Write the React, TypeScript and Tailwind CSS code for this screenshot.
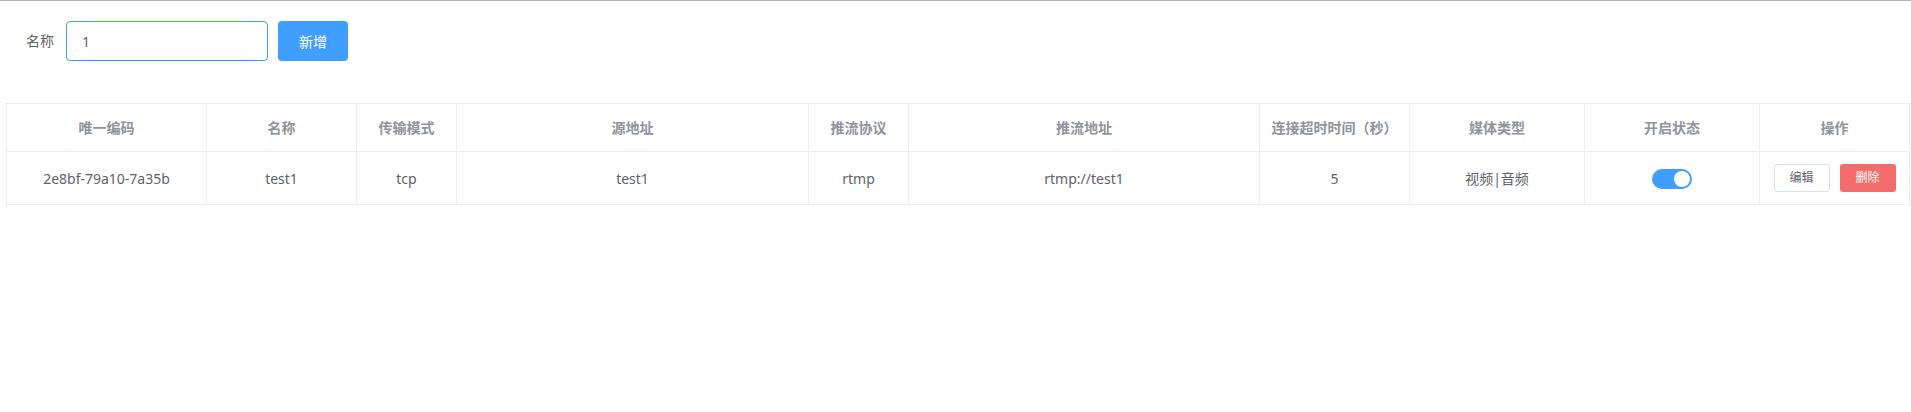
import React, { useState } from "react";

interface StreamRow {
  id: string;
  name: string;
  transport: string;
  source: string;
  protocol: string;
  pushUrl: string;
  timeout: number;
  media: string;
  enabled: boolean;
}

const columns = [
  { label: "唯一编码", width: "w-[200px]" },
  { label: "名称", width: "w-[150px]" },
  { label: "传输模式", width: "w-[100px]" },
  { label: "源地址", width: "w-[352px]" },
  { label: "推流协议", width: "w-[100px]" },
  { label: "推流地址", width: "w-[351px]" },
  { label: "连接超时时间（秒）", width: "w-[150px]" },
  { label: "媒体类型", width: "w-[175px]" },
  { label: "开启状态", width: "w-[175px]" },
  { label: "操作", width: "w-[150px]" },
];

const rows: StreamRow[] = [
  {
    id: "2e8bf-79a10-7a35b",
    name: "test1",
    transport: "tcp",
    source: "test1",
    protocol: "rtmp",
    pushUrl: "rtmp://test1",
    timeout: 5,
    media: "视频|音频",
    enabled: true,
  },
];

const Switch = ({ on, onToggle }: { on: boolean; onToggle: () => void }) => (
  <button
    onClick={onToggle}
    className={`relative inline-flex h-5 w-10 items-center rounded-full align-middle ${on ? "bg-[#409eff]" : "bg-[#dcdfe6]"}`}
  >
    <span
      className={`absolute top-[2px] h-4 w-4 rounded-full bg-white ${on ? "left-[22px]" : "left-[2px]"}`}
    />
  </button>
);

export default function App() {
  const [name, setName] = useState("1");
  const [data, setData] = useState<StreamRow[]>(rows);

  const toggle = (id: string) => {
    setData(data.map((r) => (r.id === id ? { ...r, enabled: !r.enabled } : r)));
  };

  return (
    <div className="min-h-screen w-full border-t border-[#b4b4b4] bg-white font-['Noto_Sans','Noto_Sans_CJK_SC',sans-serif] text-[14px] text-[#606266]">
      {/* search form */}
      <div className="flex items-center pl-[26px] pt-[20px]">
        <span className="mr-[12px] leading-none">名称</span>
        <input
          value={name}
          onChange={(e) => setName(e.target.value)}
          className="h-10 w-[202px] rounded-[4px] border border-[#409eff] px-[15px] text-[14px] text-[#606266] outline-none"
        />
        <button className="ml-[10px] h-10 w-[70px] rounded-[4px] bg-[#409eff] text-[14px] text-white">
          新增
        </button>
      </div>

      {/* table */}
      <div className="mt-[42px] pl-[6px]">
        <table className="table-fixed border-collapse">
          <colgroup>
            {columns.map((c) => (
              <col key={c.label} className={c.width} />
            ))}
          </colgroup>
          <thead>
            <tr className="h-[48px]">
              {columns.map((c) => (
                <th
                  key={c.label}
                  className="border border-[#ebeef5] p-0 text-center text-[14px] font-bold text-[#909399]"
                >
                  {c.label}
                </th>
              ))}
            </tr>
          </thead>
          <tbody>
            {data.map((r) => (
              <tr key={r.id} className="h-[53px]">
                <td className="border border-[#ebeef5] text-center">{r.id}</td>
                <td className="border border-[#ebeef5] text-center">{r.name}</td>
                <td className="border border-[#ebeef5] text-center">{r.transport}</td>
                <td className="border border-[#ebeef5] text-center">{r.source}</td>
                <td className="border border-[#ebeef5] text-center">{r.protocol}</td>
                <td className="border border-[#ebeef5] text-center">{r.pushUrl}</td>
                <td className="border border-[#ebeef5] text-center">{r.timeout}</td>
                <td className="border border-[#ebeef5] text-center">{r.media}</td>
                <td className="border border-[#ebeef5] text-center">
                  <Switch on={r.enabled} onToggle={() => toggle(r.id)} />
                </td>
                <td className="border border-[#ebeef5] text-center">
                  <div className="flex items-center justify-center gap-[10px]">
                    <button className="h-7 w-14 rounded-[3px] border border-[#dcdfe6] bg-white text-[12px] text-[#606266]">
                      编辑
                    </button>
                    <button className="h-7 w-14 rounded-[3px] bg-[#f56c6c] text-[12px] text-white">
                      删除
                    </button>
                  </div>
                </td>
              </tr>
            ))}
          </tbody>
        </table>
      </div>
    </div>
  );
}
